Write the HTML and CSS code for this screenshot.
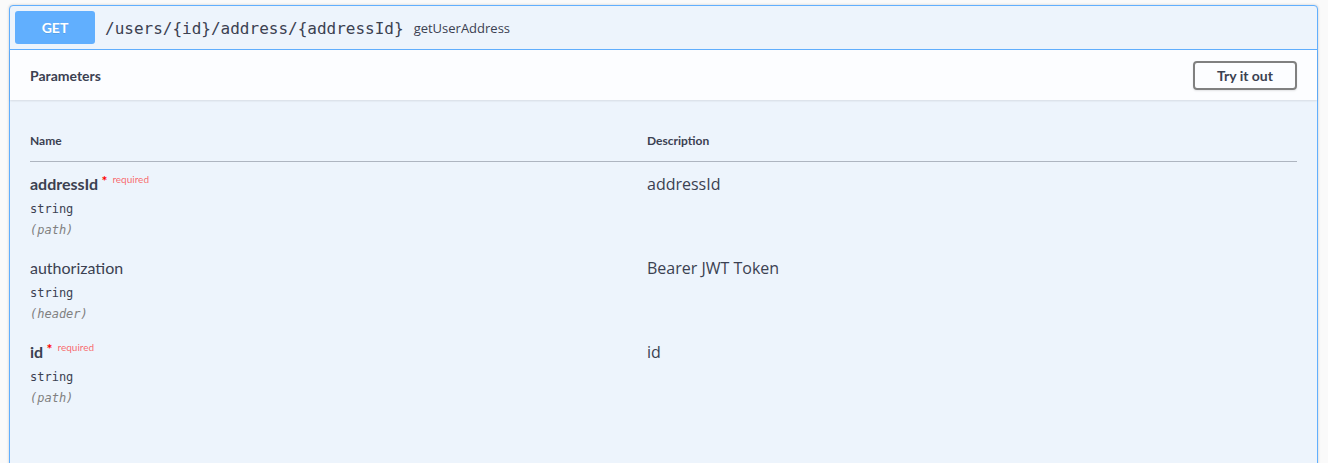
FILE: index.html
```html
<!DOCTYPE html>
<html lang="en">
<head>
<meta charset="utf-8">
<title>getUserAddress</title>
<link rel="stylesheet" href="styles.css">
</head>
<body>
<div class="page">
  <div class="opblock">
    <div class="summary">
      <span class="method">GET</span>
      <span class="path">/users/{id}/address/{addressId}</span>
      <span class="opid">getUserAddress</span>
    </div>
    <div class="section-header">
      <h4 class="section-title">Parameters</h4>
      <button class="try-btn" type="button">Try it out</button>
    </div>
    <div class="params">
      <div class="params-head">
        <div>Name</div>
        <div>Description</div>
      </div>
      <div class="param-row">
        <div class="param-name-col">
          <div class="param-name required">addressId<span class="star">&nbsp;*</span><span class="req">required</span></div>
          <div class="param-type">string</div>
          <div class="param-in">(path)</div>
        </div>
        <div class="param-desc">addressId</div>
      </div>
      <div class="param-row">
        <div class="param-name-col">
          <div class="param-name">authorization</div>
          <div class="param-type">string</div>
          <div class="param-in">(header)</div>
        </div>
        <div class="param-desc">Bearer JWT Token</div>
      </div>
      <div class="param-row">
        <div class="param-name-col">
          <div class="param-name required">id<span class="star">&nbsp;*</span><span class="req">required</span></div>
          <div class="param-type">string</div>
          <div class="param-in">(path)</div>
        </div>
        <div class="param-desc">id</div>
      </div>
    </div>
  </div>
</div>
</body>
</html>
```

FILE: styles.css
```css
html, body {
  margin: 0;
  height: 463px;
  overflow: hidden;
  background: #fafafa;
  color: #3b4151;
  font-family: "Lato", "Open Sans", sans-serif;
}

.page {
  padding: 5px 10px 0 9px;
}

.opblock {
  border: 1px solid #61affe;
  border-radius: 4px;
  background: #edf4fc;
  box-shadow: 0 0 3px rgba(0, 0, 0, 0.19);
}

.summary {
  display: flex;
  align-items: center;
  gap: 10px;
  padding: 5px;
  border-bottom: 1px solid #61affe;
}

.method {
  display: flex;
  align-items: center;
  justify-content: center;
  width: 80px;
  height: 33px;
  background: #61affe;
  color: #fff;
  border-radius: 3px;
  font-size: 14px;
  font-weight: 700;
  text-shadow: 0 1px 0 rgba(0, 0, 0, 0.1);
}

.path {
  font-family: "DejaVu Sans Mono", "Liberation Mono", monospace;
  font-size: 16px;
  color: #3b4151;
  padding-top: 1px;
}

.opid {
  font-family: "Open Sans", sans-serif;
  font-size: 13px;
  color: #3b4151;
  padding-top: 1px;
}

.section-header {
  display: flex;
  align-items: center;
  justify-content: space-between;
  height: 50px;
  padding: 0 20px;
  background: rgba(255, 255, 255, 0.8);
  box-shadow: 0 1px 2px rgba(0, 0, 0, 0.1);
}

.section-title {
  margin: 0;
  font-size: 14px;
  font-weight: 700;
  padding-top: 1px;
}

.try-btn {
  width: 104px;
  height: 29px;
  padding: 0;
  border: 2px solid #808080;
  border-radius: 4px;
  background: transparent;
  color: #3b4151;
  font-family: "Lato", sans-serif;
  font-size: 14px;
  font-weight: 700;
  box-shadow: 0 1px 2px rgba(0, 0, 0, 0.1);
}

.params {
  padding: 20px 20px 80px;
}

.params-head {
  display: grid;
  grid-template-columns: 617px 1fr;
  padding: 12px 0;
  border-bottom: 1px solid #aeb5c0;
  font-size: 12px;
  font-weight: 700;
  line-height: 17px;
}

.param-row {
  display: grid;
  grid-template-columns: 617px 1fr;
  padding: 10px 0 7px;
}

.param-name {
  font-size: 16px;
  line-height: 24px;
  height: 24px;
  color: #3b4151;
}

.param-name.required {
  font-weight: 700;
}

.star {
  color: #ff0000;
  font-size: 14px;
  line-height: 1;
  position: relative;
  top: -4px;
}

.req {
  font-size: 10px;
  font-weight: 400;
  line-height: 1;
  color: rgba(255, 0, 0, 0.6);
  padding-left: 5px;
  position: relative;
  top: -7px;
}

.param-type {
  margin-top: 3px;
  font-family: "DejaVu Sans Mono", "Liberation Mono", monospace;
  font-size: 12px;
  line-height: 20px;
  color: #3b4151;
}

.param-in {
  margin-top: 2px;
  font-family: "DejaVu Sans Mono", "Liberation Mono", monospace;
  font-size: 12px;
  font-style: italic;
  line-height: 18px;
  color: #808080;
}

.param-desc {
  font-family: "Open Sans", sans-serif;
  font-size: 16px;
  line-height: 24px;
  color: #3b4151;
}
```
